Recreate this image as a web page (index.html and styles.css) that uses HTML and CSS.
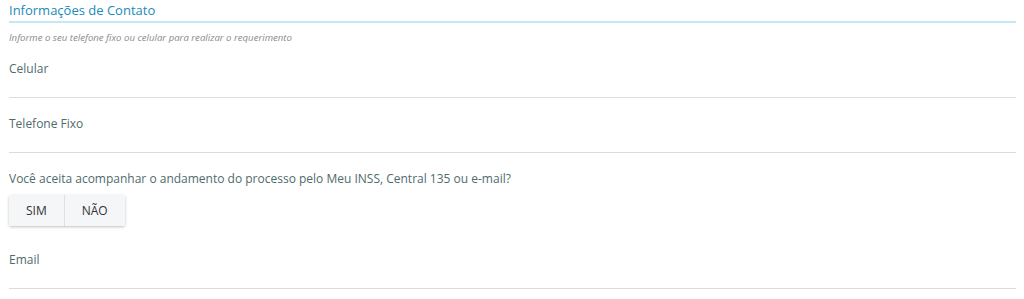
FILE: index.html
```html
<!DOCTYPE html>
<html lang="pt-BR">
<head>
    <meta charset="UTF-8">
    <meta name="viewport" content="width=device-width, initial-scale=1.0">
    <title>Informações de Contato</title>
    <link rel="stylesheet" href="styles.css">
</head>
<body>
    <div class="section">
        <h2 class="section-title">Informações de Contato</h2>
        <p class="hint">Informe o seu telefone fixo ou celular para realizar o requerimento</p>

        <div class="field">
            <label for="celular">Celular</label>
            <input type="text" id="celular" name="celular">
        </div>

        <div class="field">
            <label for="telefone">Telefone Fixo</label>
            <input type="text" id="telefone" name="telefone">
        </div>

        <div class="question">
            <p>Você aceita acompanhar o andamento do processo pelo Meu INSS, Central 135 ou e-mail?</p>
            <div class="toggle">
                <button type="button">SIM</button>
                <button type="button">NÃO</button>
            </div>
        </div>

        <div class="field">
            <label for="email">Email</label>
            <input type="text" id="email" name="email">
        </div>
    </div>
</body>
</html>
```

FILE: styles.css
```css
body {
    font-family: "Open Sans", Arial, sans-serif;
    margin: 0;
    padding: 0 8px 0 9px;
    background-color: #fff;
    color: #4f6b6b;
}
.section {
    padding-top: 2px;
}
.section-title {
    font-size: 13px;
    font-weight: normal;
    color: #1a8ab8;
    margin: 0;
    padding-bottom: 3px;
    border-bottom: 2px solid #c3e7f5;
    line-height: 16px;
}
.hint {
    font-size: 9.6px;
    font-style: italic;
    color: #8a8a8a;
    margin: 9px 0 0;
    line-height: 12px;
}
.field {
    margin-top: 18px;
}
.hint + .field {
    margin-top: 17px;
}
.question + .field {
    margin-top: 26px;
}
.field label {
    display: block;
    font-size: 12px;
    line-height: 16px;
}
.field input {
    display: block;
    width: 100%;
    height: 20px;
    border: none;
    border-bottom: 1px solid #dcdcdc;
    padding: 0;
    box-sizing: content-box;
    outline: none;
}
.question {
    margin-top: 18px;
}
.question p {
    margin: 0;
    font-size: 12px;
    line-height: 16px;
}
.toggle {
    display: inline-flex;
    margin-top: 8px;
    box-shadow: 0 1px 3px rgba(0, 0, 0, 0.25);
    border-radius: 2px;
}
.toggle button {
    font-family: inherit;
    font-size: 12px;
    color: #333;
    background-color: #f5f6f8;
    border: none;
    height: 31px;
    padding: 0 17px;
    cursor: pointer;
}
.toggle button + button {
    border-left: 1px solid #dde0e4;
}
```
